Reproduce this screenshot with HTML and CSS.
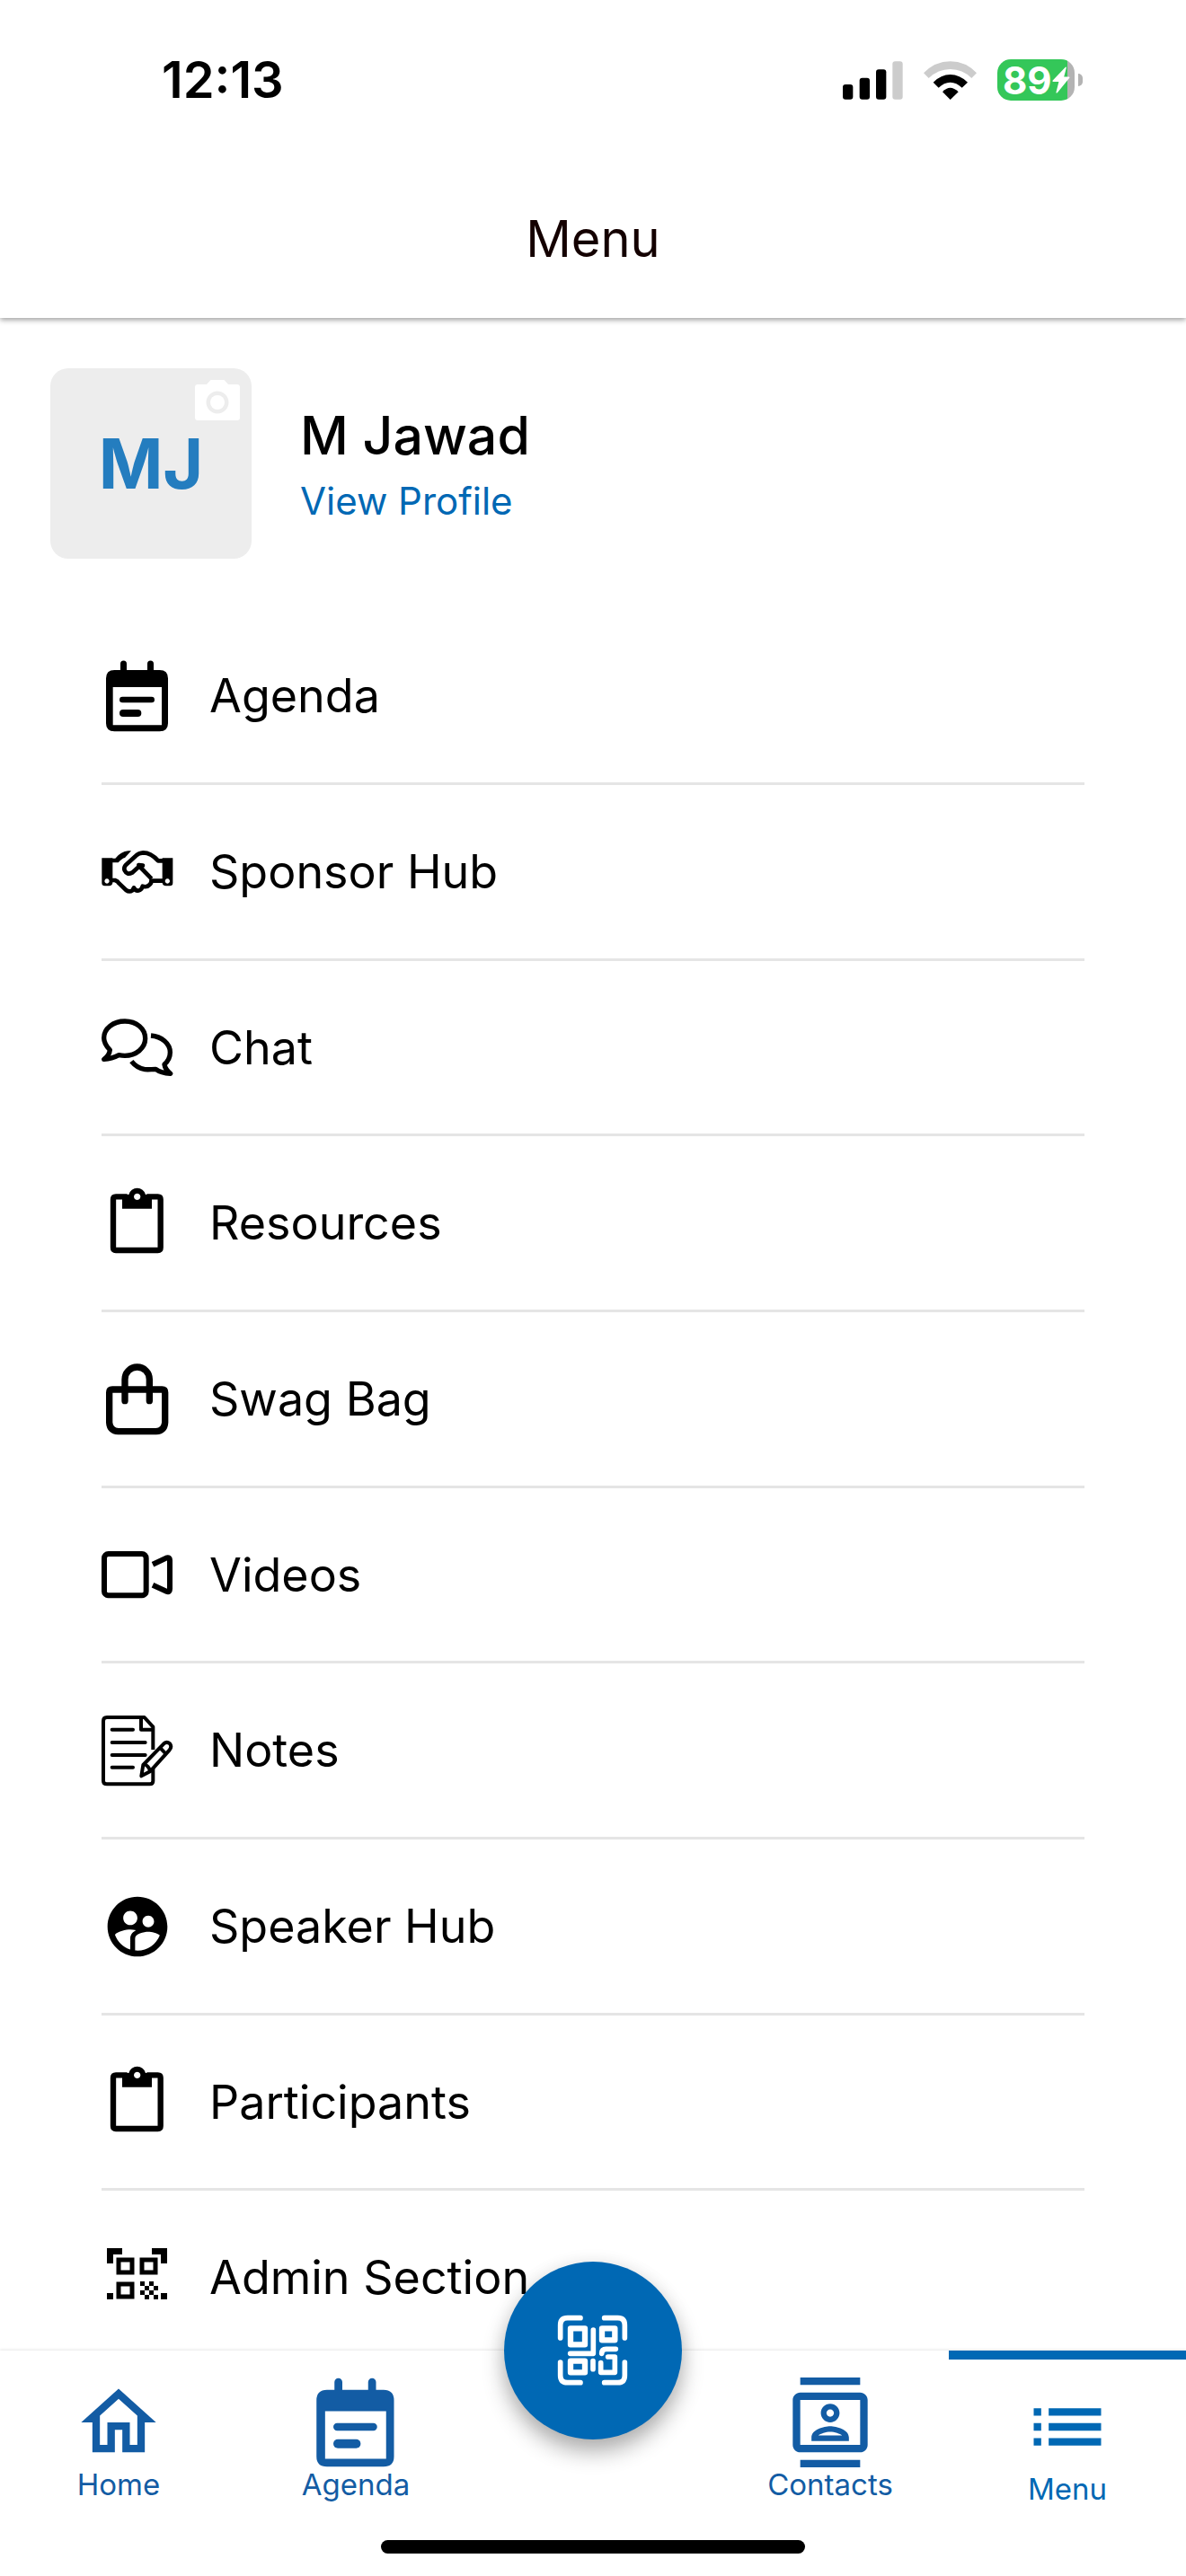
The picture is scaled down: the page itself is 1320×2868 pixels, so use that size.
FILE: index.html
```html
<!DOCTYPE html>
<html lang="en">
<head>
<meta charset="utf-8">
<meta name="viewport" content="width=device-width, initial-scale=1">
<title>Menu</title>
<link rel="stylesheet" href="styles.css">
</head>
<body>
<svg class="sprite" aria-hidden="true">
  <symbol id="i-agenda" viewBox="69 75 240 240">
    <path fill="currentColor" fill-rule="evenodd" d="M132 108V87a10 10 0 0 1 21 0V108H222V87a10 10 0 0 1 21 0V108H263Q291 108 291 136V286Q291 313 263 313H112Q84 313 84 286V136Q84 108 112 108ZM107 165V292H270V165Z"/>
    <path stroke="currentColor" stroke-width="20" stroke-linecap="round" d="M139 207H236"/>
    <path stroke="currentColor" stroke-width="24" stroke-linecap="round" d="M141 252H190"/>
  </symbol>
  <symbol id="i-clipboard" viewBox="69 666 240 240">
    <path fill="none" stroke="currentColor" stroke-width="19" d="M155 697H117Q108 697 108 706V867Q108 876 117 876H257Q266 876 266 867V706Q266 697 257 697H220"/>
    <path fill="currentColor" fill-rule="evenodd" d="M138 690H160A29 29 0 0 1 216 690H237V737H138ZM188 686a11 11 0 1 0 .1 0Z"/>
  </symbol>
</svg>
<div class="app">
  <header class="header">
    <div class="status">
      <span class="clock">12:13</span>
      <div class="indicators">
        <svg class="signal" viewBox="51 52 201 129" aria-hidden="true">
          <rect x="51" y="130" width="34" height="50" rx="9"/>
          <rect x="107" y="108" width="34" height="72" rx="9"/>
          <rect x="162" y="80" width="34" height="100" rx="9"/>
          <rect x="217" y="53" width="34" height="127" rx="9" fill="#ccc"/>
        </svg>
        <svg class="wifi" viewBox="320 50 177 129" aria-hidden="true">
          <path fill="#ccc" d="M320 90Q358 51 409 51T497 90L480 107Q450 77 409 77T337 107Z"/>
          <path d="M352 121Q378 95 409 95T467 121L448 139Q430 121 409 121T370 139Z"/>
          <path d="M383 153Q408 126 436 153L409 179Z"/>
        </svg>
        <div class="battery">
          <div class="battery-body">
            <span>89</span>
            <svg class="bolt" viewBox="0 0 62 92" aria-hidden="true"><path d="M46 2Q50-1 49 4L41 35H58Q62 36 59 40L18 90Q13 93 14 88L23 52H4Q-1 51 3 47Z" fill="#fff"/></svg>
          </div>
          <div class="battery-cap"></div>
        </div>
      </div>
    </div>
    <h1 class="title">Menu</h1>
  </header>

  <main class="content">
    <section class="profile">
      <div class="avatar">
        <span>MJ</span>
        <button class="camera" type="button" aria-label="Change photo">
          <svg viewBox="0 0 24 24" fill="#fff"><circle cx="12" cy="12" r="3.2"/><path d="M9 2L7.17 4H3.2C2.5 4 2 4.500 2 5.200V18.800C2 19.500 2.500 20 3.200 20H20.800C21.500 20 22 19.500 22 18.800V5.200C22 4.500 21.500 4 20.800 4H16.830L15 2H9zm3 15c-2.760 0-5-2.240-5-5s2.240-5 5-5 5 2.240 5 5-2.240 5-5 5z"/></svg>
        </button>
      </div>
      <div class="who">
        <h2 class="name">M Jawad</h2>
        <a class="view" href="#profile">View Profile</a>
      </div>
    </section>

    <ul class="menu">
      <li><a href="#agenda"><svg><use href="#i-agenda"/></svg>Agenda</a></li>
      <li><a href="#sponsors">
        <svg viewBox="39 2 240 240">
          <path fill="currentColor" fill-rule="evenodd" d="M40 75H76V158Q74 168 64 168H50Q40 168 40 158ZM57 144a8 8 0 1 0 .1 0ZM242 75H277V158Q277 168 267 168H254Q244 168 242 158ZM259 144a8 8 0 1 0 .1 0Z"/>
          <path fill="currentColor" d="M74 76H85Q104 53 128 51H138L117 74Q107 76 95 90H74Z"/>
          <g fill="none" stroke="currentColor" stroke-width="14" stroke-linejoin="round">
            <path d="M244 84H228Q204 57 178 57Q163 58 154 67L121 97Q112 106 116 116Q124 133 141 124L170 98"/>
            <path d="M163 98L177 100" stroke-linecap="round"/>
            <path d="M167 104L206 144"/>
            <path d="M74 149H84Q93 152 98 160L121 182Q132 190 142 183L147 174Q154 188 167 182Q174 178 176 169Q190 174 198 165Q206 159 205 151H244"/>
          </g>
        </svg>Sponsor Hub</a></li>
      <li><a href="#chat">
        <svg viewBox="69 79 240 240" fill="none" stroke="currentColor" stroke-width="16" stroke-linejoin="round">
          <path d="M97 208C80 190 77 180 77 168C77 136 108 112 147 112C186 112 215 137 215 170C215 202 184 227 147 227C140 227 132 226 127 225C112 233 96 238 77 239C90 230 96 218 97 208Z"/>
          <path d="M234 160C270 163 298 187 298 216C298 234 290 246 279 256C281 270 288 278 299 287C280 286 262 281 250 272C238 273 226 274 214 273C194 270 180 260 169 246"/>
        </svg>Chat</a></li>
      <li><a href="#resources"><svg><use href="#i-clipboard"/></svg>Resources</a></li>
      <li><a href="#swag">
        <svg viewBox="69 83 240 240" fill="none" stroke="currentColor" stroke-width="22">
          <path d="M105 170H271Q281 170 281 180V280Q279 308 251 310H125Q97 308 95 280V180Q95 170 105 170Z"/>
          <path stroke-linecap="round" d="M147 208V136A41 41 0 0 1 229 136V208"/>
        </svg>Swag Bag</a></li>
      <li><a href="#videos">
        <svg viewBox="69 670 240 240" fill="none" stroke="currentColor" stroke-width="18">
          <rect x="78" y="721" width="140" height="139" rx="14"/>
          <path d="M240 756L287 734Q297 732 297 742V838Q297 850 287 847L240 825"/>
        </svg>Videos</a></li>
      <li><a href="#notes">
        <svg viewBox="69 87 240 240" fill="none" stroke="currentColor" stroke-width="12" stroke-linejoin="round">
          <path d="M241 204V128L212 96H87Q75 96 75 108V308Q75 319 87 319H230Q241 319 241 308V264"/>
          <path d="M201 98V137H243"/>
          <path stroke-linecap="round" d="M104 137H174M104 180H215M104 222H215M104 263H174"/>
          <path d="M202 292L208 255L277 184Q287 175 297 184Q305 194 296 205L231 277Z"/>
          <path d="M263 196L283 217M211 252Q227 258 231 275"/>
        </svg>Notes</a></li>
      <li><a href="#speakers">
        <svg viewBox="0 0 24 24" fill="currentColor"><path d="M12 2C6.48 2 2 6.48 2 12s4.480 10 10 10 10-4.480 10-10S17.520 2 12 2zm3.610 6.340c1.070 0 1.930.86 1.930 1.930 0 1.070-.86 1.930-1.930 1.930-1.070 0-1.930-.86-1.930-1.930-.01-1.070.86-1.930 1.930-1.930zm-6-1.580c1.300 0 2.360 1.060 2.360 2.360 0 1.300-1.060 2.360-2.360 2.360s-2.360-1.060-2.360-2.360c0-1.310 1.050-2.360 2.360-2.360zm0 9.130v3.750c-2.400-.75-4.300-2.600-5.140-4.960 1.050-1.120 3.670-1.690 5.140-1.690.53 0 1.200.08 1.900.22-1.640.87-1.900 2.020-1.900 2.680zM12 20c-.27 0-.53-.01-.79-.04v-4.070c0-1.420 2.940-2.130 4.400-2.130 1.070 0 2.920.39 3.840 1.150C18.280 17.880 15.390 20 12 20z"/></svg>Speaker Hub</a></li>
      <li><a href="#participants"><svg><use href="#i-clipboard"/></svg>Participants</a></li>
      <li><a href="#admin">
        <svg viewBox="0 0 80 80">
          <path fill="currentColor" d="M6 7H23V14H13V24H6ZM56 7H73V24H66V14H56ZM6 57H13V64H6ZM66 57H73V64H66Z"/>
          <path fill="none" stroke="currentColor" stroke-width="5" d="M19 20H34V34H19ZM45 20H60V34H45ZM19 47H34V61H19Z"/>
          <path fill="currentColor" d="M43 44h5v5h-5zM53 44h5v5h-5zM48 49h5v5h-5zM58 49h5v5h-5zM43 54h5v5h-5zM53 54h5v5h-5zM48 59h5v5h-5zM58 59h5v5h-5z"/>
        </svg>Admin Section</a></li>
    </ul>
  </main>

  <nav class="tabs">
    <a class="tab" href="#home"><svg viewBox="0 0 24 24" fill="currentColor"><path d="M12 5.690l5 4.500V18h-2v-6H9v6H7v-7.810l5-4.500M12 3L2 12h3v8h6v-6h2v6h6v-8h3L12 3z"/></svg>Home</a>
    <a class="tab" href="#agenda"><svg><use href="#i-agenda"/></svg>Agenda</a>
    <button class="scan" type="button" aria-label="Scan code">
      <svg viewBox="60 51 240 240" fill="none" stroke="currentColor" stroke-width="17" stroke-linecap="round" stroke-linejoin="round">
        <path d="M71 129V86Q71 62 95 62H138M218 62H263Q286 62 286 86V129M286 210V254Q286 278 263 278H218M138 278H95Q71 278 71 254V210"/>
        <path stroke-width="19" d="M105 97H153V151H105ZM105 206H153V244H105ZM210 97H253V136H210Z"/>
        <path d="M181 102V181H104M180 206V233M256 166H224Q209 166 209 181M230 192H253V244H206V212"/>
      </svg>
    </button>
    <a class="tab tab-contacts" href="#contacts"><svg viewBox="0 0 24 24" fill="currentColor"><path d="M20 4H4c-1.100 0-2 .9-2 2v12c0 1.100.9 2 2 2h16c1.100 0 2-.9 2-2V6c0-1.100-.9-2-2-2zm0 14H4V6h16v12zM4 0h16v2H4zm0 22h16v2H4zm8-10c1.380 0 2.500-1.120 2.500-2.500S13.380 7 12 7 9.500 8.120 9.500 9.500 10.620 12 12 12zm0-3.500c.55 0 1 .45 1 1s-.45 1-1 1-1-.45-1-1 .45-1 1-1zm5 7.490C17 13.900 13.690 13 12 13s-5 .9-5 2.990V17h10v-1.010zm-8.190-.49c.61-.52 2.030-1 3.190-1 1.170 0 2.590.48 3.200 1H8.810z"/></svg>Contacts</a>
    <a class="tab tab-active" href="#menu" aria-current="page"><svg viewBox="0 0 24 24" fill="currentColor"><path d="M3 7h2v2H3zM7 7h14v2H7zM3 11h2v2H3zM7 11h14v2H7zM3 15h2v2H3zM7 15h14v2H7z"/></svg>Menu</a>
    <div class="home-bar"></div>
  </nav>
</div>
</body>
</html>
```
FILE: styles.css
```css
* {
  box-sizing: border-box;
}

body {
  margin: 0;
  background: #fff;
  color: #000;
  font-family: Inter, "Liberation Sans", sans-serif;
}

a {
  color: inherit;
  text-decoration: none;
}

button {
  border: 0;
  padding: 0;
  background: none;
  cursor: pointer;
}

svg {
  display: block;
  flex: none;
}

.sprite {
  position: absolute;
  width: 0;
  height: 0;
}

.app {
  display: flex;
  flex-direction: column;
  height: 100vh;
}

/* Header */
.header {
  flex: none;
  position: relative;
  box-shadow: 0 2px 6px rgba(0, 0, 0, 0.4);
}

.status {
  display: flex;
  align-items: center;
  justify-content: space-between;
  height: 178px;
  padding: 0 115px 0 180px;
}

.clock {
  font-size: 56px;
  font-weight: 600;
}

.indicators {
  display: flex;
  align-items: center;
  gap: 23px;
}

.signal {
  width: 67px;
  height: 43px;
}

.wifi {
  width: 59px;
  height: 43px;
}

.battery {
  display: flex;
  align-items: center;
  gap: 4px;
}

.battery-body {
  display: flex;
  align-items: center;
  width: 86px;
  height: 46px;
  padding-left: 6px;
  border-radius: 15px;
  background: linear-gradient(to right, #34c759 78px, #b3b3b3 78px);
  color: #fff;
  font-size: 42px;
  font-weight: 700;
}

.bolt {
  width: 20px;
  height: 30px;
}

.battery-cap {
  width: 5px;
  height: 14px;
  border-radius: 0 7px 7px 0;
  background: #b3b3b3;
}

.title {
  margin: 0;
  color: #140000;
  font-size: 56px;
  font-weight: 400;
  line-height: 176px;
  text-align: center;
}

/* Profile */
.content {
  flex: 1;
  min-height: 0;
  overflow-y: auto;
  scrollbar-width: none;
}

.profile {
  display: flex;
  align-items: center;
  gap: 54px;
  padding: 56px;
}

.avatar {
  position: relative;
  display: flex;
  align-items: center;
  justify-content: center;
  width: 224px;
  height: 212px;
  border-radius: 20px;
  background: #ededed;
  color: #247dbf;
  font-size: 77px;
  font-weight: 700;
}

.camera {
  position: absolute;
  top: 8px;
  right: 8px;
}

.camera svg {
  width: 60px;
  height: 60px;
}

.who {
  display: flex;
  flex-direction: column;
  padding-top: 8px;
}

.name {
  margin: 0;
  font-size: 59px;
  font-weight: 500;
  line-height: 76px;
}

.view {
  color: #0068b4;
  font-size: 42px;
  line-height: 70px;
}

/* Menu */
.menu {
  margin: 0;
  padding: 0 113px;
  list-style: none;
}

.menu a {
  display: flex;
  align-items: center;
  gap: 40px;
  height: 196px;
  border-bottom: 3px solid #e5e5e5;
  font-size: 52px;
}

.menu li:nth-child(3n) a {
  height: 195px;
}

.menu svg {
  width: 80px;
  height: 80px;
}

/* Bottom tabs */
.tabs {
  flex: none;
  position: relative;
  display: grid;
  grid-template-columns: repeat(5, 1fr);
  height: 251px;
  background: #fff;
  box-shadow: 0 -1px 3px rgba(0, 0, 0, 0.1);
}

.tab {
  display: flex;
  flex-direction: column;
  align-items: center;
  padding-top: 30px;
  color: #135ca4;
  font-size: 33px;
  line-height: 38px;
}

.tab svg {
  width: 100px;
  height: 100px;
}

.tab-contacts {
  grid-column: 4;
}

.tab-active {
  padding-top: 25px;
  border-top: 10px solid #0068b4;
  color: #0068b4;
}

.scan {
  position: absolute;
  top: 0;
  left: 50%;
  display: flex;
  align-items: center;
  justify-content: center;
  width: 198px;
  height: 198px;
  border-radius: 50%;
  background: #0068b4;
  color: #fff;
  box-shadow: 0 14px 24px rgba(0, 0, 0, 0.3), 0 0 20px rgba(0, 0, 0, 0.06);
  transform: translate(-50%, -50%);
}

.scan svg {
  width: 80px;
  height: 80px;
}

.home-bar {
  position: absolute;
  bottom: 25px;
  left: 50%;
  width: 472px;
  height: 15px;
  border-radius: 8px;
  background: #000;
  transform: translateX(-50%);
}
```
